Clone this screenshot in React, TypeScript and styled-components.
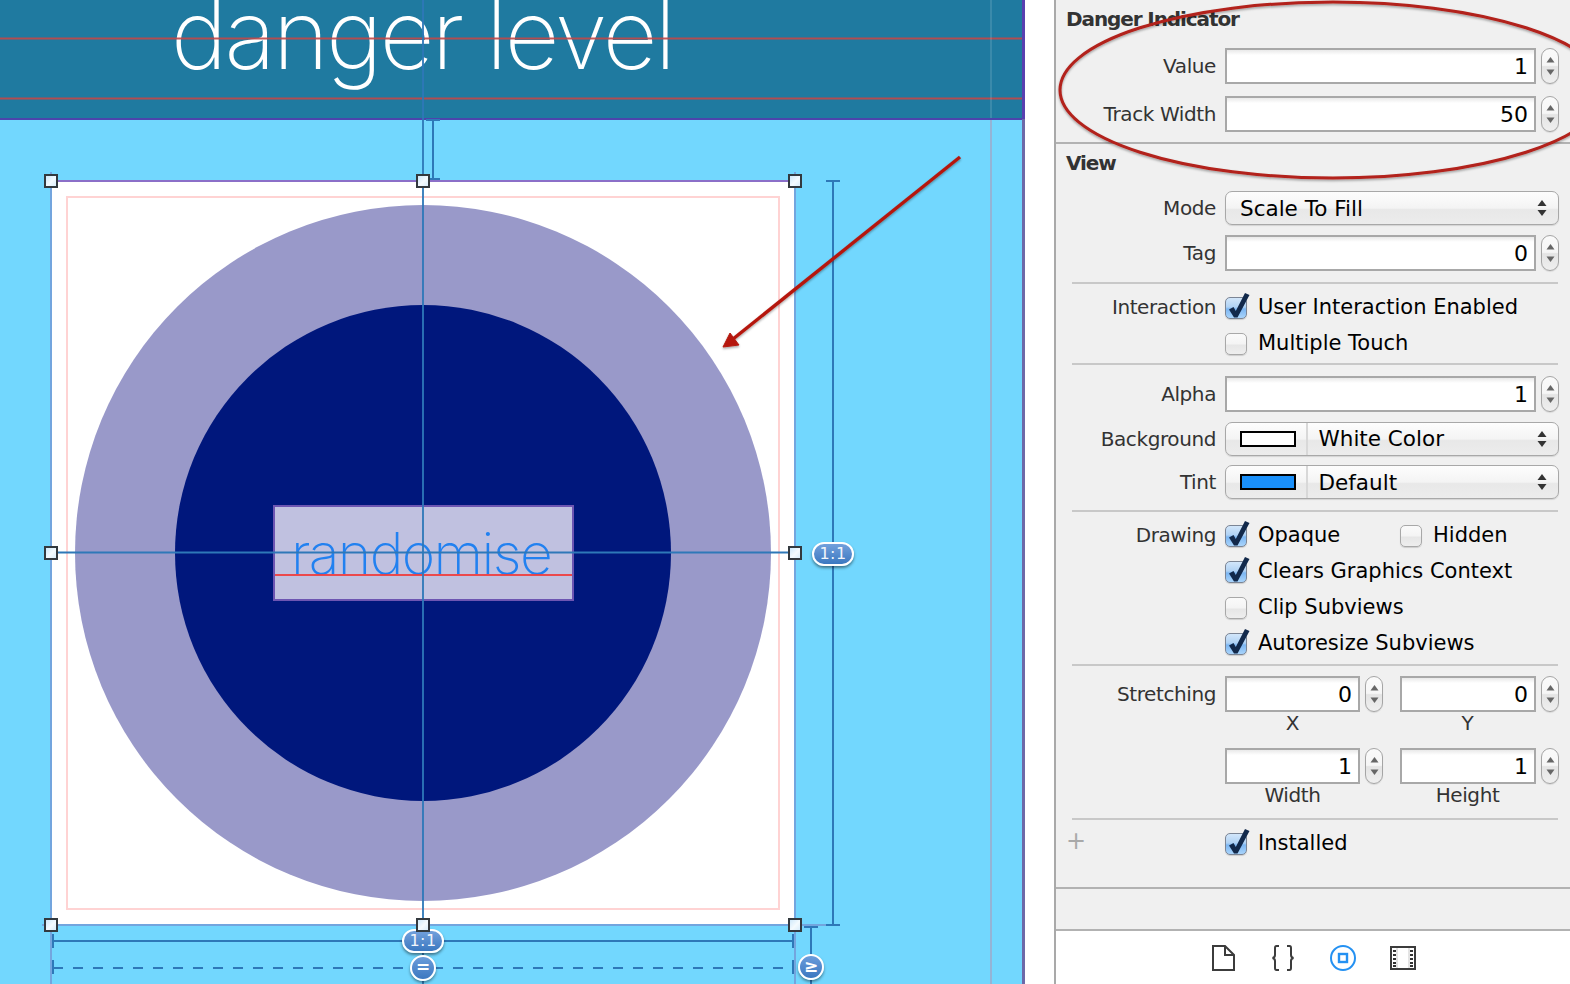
import React from "react";
import styled, { createGlobalStyle } from "styled-components";

const Global = createGlobalStyle`
  html, body { margin: 0; padding: 0; background: #fff; }
  #root { width: 1570px; height: 984px; }
`;

const Page = styled.div`
  position: relative;
  width: 1570px;
  height: 984px;
  overflow: hidden;
  display: flex;
  background: #fff;
`;

/* ---------- design canvas ---------- */

const Stage = styled.div`
  position: relative;
  flex: none;
  width: 1022px;
  height: 984px;
  background: #72d7fe;
  border-right: 3px solid;
  border-image: linear-gradient(#5940b0 120px, #6d69a8 120px) 1;
  overflow: hidden;
`;

const HeaderBand = styled.div`
  height: 118px;
  background: #1f7aa0;
  border-bottom: 2px solid #4c44ac;
  display: flex;
  justify-content: flex-start;
  padding-left: 171px;
  overflow: hidden;
`;

const Title = styled.div`
  font-family: Inter, "Liberation Sans", sans-serif;
  font-weight: 200;
  font-size: 95px;
  line-height: 96px;
  letter-spacing: -2.6px;
  color: #fff;
  margin-top: -13px;
  white-space: nowrap;
`;

const ViewBox = styled.div`
  position: absolute;
  left: 50px;
  top: 180px;
  width: 746px;
  height: 746px;
  box-sizing: border-box;
  background: #fff;
  border: 2px solid #6fa2dc;
  border-top-color: #8b6fc8;
  display: flex;
  align-items: center;
  justify-content: center;
`;

const Margin = styled.div`
  position: absolute;
  inset: 14px;
  border: 2px solid #ffd3d3;
`;

const Ring = styled.div`
  position: relative;
  flex: none;
  width: 696px;
  height: 696px;
  border-radius: 50%;
  background: #9999c9;
  display: flex;
  align-items: center;
  justify-content: center;
`;

const Core = styled.div`
  flex: none;
  width: 496px;
  height: 496px;
  border-radius: 50%;
  background: #00177c;
  display: flex;
  align-items: center;
  justify-content: center;
`;

const RandomButton = styled.div`
  position: relative;
  flex: none;
  box-sizing: border-box;
  width: 301px;
  height: 96px;
  background: #c0c1e0;
  border: 2px solid #6d55b2;
  display: flex;
  align-items: center;
  justify-content: center;
  font-family: Inter, "Liberation Sans", sans-serif;
  font-weight: 200;
  font-size: 57px;
  letter-spacing: -1.6px;
  color: #2281f0;
  padding: 1px 4px 0 0;
`;

const Baseline = styled.div`
  position: absolute;
  left: 0;
  right: 0;
  top: 67px;
  height: 2px;
  background: rgba(240, 60, 60, 0.9);
`;

const GuideLayer = styled.svg`
  position: absolute;
  left: 0;
  top: 0;
`;

const Handle = styled.div<{ $x: number; $y: number }>`
  position: absolute;
  left: ${(p) => p.$x - 7}px;
  top: ${(p) => p.$y - 7}px;
  width: 14px;
  height: 14px;
  box-sizing: border-box;
  border: 2px solid #33393e;
  background: linear-gradient(135deg, #cfe9fb 0%, #f4fafe 55%, #d9edfb 100%);
`;

const Pill = styled.div<{ $x: number; $y: number }>`
  position: absolute;
  left: ${(p) => p.$x - 21}px;
  top: ${(p) => p.$y - 12}px;
  width: 42px;
  height: 24px;
  box-sizing: border-box;
  border: 2px solid #fff;
  border-radius: 12px;
  background: linear-gradient(#72a0dc, #3b78c0);
  box-shadow: 0 2px 3px rgba(0, 0, 0, 0.45);
  color: #f2f5fb;
  font: 16px/20px "DejaVu Sans", sans-serif;
  letter-spacing: 0.4px;
  text-align: center;
`;

const RoundBadge = styled.div<{ $x: number; $y: number }>`
  position: absolute;
  left: ${(p) => p.$x - 13}px;
  top: ${(p) => p.$y - 13}px;
  width: 26px;
  height: 26px;
  box-sizing: border-box;
  border: 2px solid #fff;
  border-radius: 50%;
  background: linear-gradient(#6b9cdb, #3b78c0);
  box-shadow: 0 2px 3px rgba(0, 0, 0, 0.4);
  color: #fff;
  font: bold 17px/21px "DejaVu Sans", sans-serif;
  text-align: center;
`;

const Gutter = styled.div`
  flex: none;
  width: 29px;
`;

/* ---------- inspector ---------- */

const Inspector = styled.div`
  flex: none;
  width: 516px;
  height: 984px;
  box-sizing: border-box;
  background: #f0f0f0;
  border-left: 2px solid #a9a9a9;
  display: flex;
  flex-direction: column;
  font-family: "DejaVu Sans", sans-serif;
  font-size: 20px;
  letter-spacing: -0.4px;
`;

const Section = styled.section<{ $top: number; $height: number }>`
  flex: none;
  box-sizing: border-box;
  height: ${(p) => p.$height}px;
  padding-top: ${(p) => p.$top}px;
  border-bottom: 2px solid #b2b2b2;
`;

const Heading = styled.h2<{ $below: number }>`
  margin: 0 0 ${(p) => p.$below}px 10px;
  font-size: 20px;
  line-height: 22px;
  font-weight: 700;
  letter-spacing: -1.1px;
  color: #333;
`;

const Stack = styled.div<{ $gap: number }>`
  display: flex;
  flex-direction: column;
  gap: ${(p) => p.$gap}px;
`;

const Row = styled.div<{ $above?: number }>`
  display: grid;
  grid-template-columns: 160px 334px;
  column-gap: 9px;
  align-items: center;
  margin-top: ${(p) => p.$above ?? 0}px;
`;

const Label = styled.div`
  text-align: right;
  color: #333;
  white-space: nowrap;
`;

const Divider = styled.div<{ $before: number; $after: number }>`
  height: 2px;
  background: #c8c8c8;
  margin: ${(p) => p.$before}px 12px ${(p) => p.$after}px 16px;
`;

const NumberWrap = styled.div`
  display: flex;
  gap: 5px;
  align-items: stretch;
`;

const NumberBox = styled.div`
  flex: 1;
  box-sizing: border-box;
  height: 36px;
  padding-right: 6px;
  border: 2px solid #a8a8a8;
  background: linear-gradient(#e9e9e9 0, #fff 5px);
  text-align: right;
  line-height: 34px;
  font-size: 22px;
  letter-spacing: 0;
  color: #000;
`;

const StepperBody = styled.div`
  flex: none;
  width: 18px;
  box-sizing: border-box;
  border: 1.5px solid #a5a5a5;
  border-radius: 9px;
  background: linear-gradient(#fafafa 0%, #f6f6f6 48%, #e4e4e4 52%, #efefef 100%);
  box-shadow: 0 1px 1px rgba(0, 0, 0, 0.1);
  display: flex;
  align-items: center;
  justify-content: center;
`;

const Pair = styled.div`
  display: grid;
  grid-template-columns: 158px 159px;
  column-gap: 17px;
  align-items: center;
`;

const PairCaption = styled.div`
  width: 135px;
  height: 22px;
  line-height: 22px;
  text-align: center;
  color: #333;
`;

const SelectBox = styled.div`
  box-sizing: border-box;
  height: 34px;
  border: 1.5px solid #a8a8a8;
  border-radius: 7px;
  background: linear-gradient(#fdfdfd 0%, #f4f4f4 50%, #e8e8e8 55%, #ececec 100%);
  box-shadow: 0 1px 1px rgba(0, 0, 0, 0.12);
  display: flex;
  align-items: center;
  padding: 0 11px 0 14px;
  color: #000;
  font-size: 21.5px;
  letter-spacing: 0;
`;

const SelectText = styled.span`
  flex: 1;
`;

const Swatch = styled.span<{ $color: string }>`
  flex: none;
  box-sizing: border-box;
  width: 56px;
  height: 16px;
  border: 2px solid #000;
  background: ${(p) => p.$color};
`;

const SwatchEdge = styled.span`
  flex: none;
  width: 1.5px;
  height: 32px;
  margin: 0 11px 0 10px;
  background: #d8d8d8;
`;

const CheckRow = styled.div`
  display: flex;
  align-items: center;
  gap: 11px;
  height: 36px;
  color: #000;
  font-size: 21px;
  letter-spacing: 0;
  white-space: nowrap;
`;

const Box = styled.span<{ $on?: boolean }>`
  position: relative;
  flex: none;
  box-sizing: border-box;
  width: 22px;
  height: 22px;
  margin-top: 1px;
  border: 1.5px solid ${(p) => (p.$on ? "#7b8595" : "#a8a8a8")};
  border-radius: 5px;
  background: ${(p) =>
    p.$on
      ? "linear-gradient(#d2e6fa 0%, #b0d2f4 45%, #7cb6f2 55%, #a9d4fb 100%)"
      : "linear-gradient(#fafafa 0%, #f4f4f4 50%, #e6e6e6 55%, #eeeeee 100%)"};
  box-shadow: 0 1px 1px rgba(0, 0, 0, 0.15);
`;

const CheckSvg = styled.svg`
  position: absolute;
  left: 0;
  top: 0;
  overflow: visible;
`;

const PlusMark = styled.span`
  position: absolute;
  left: 1066px;
  top: 829px;
  font: 24px/24px "DejaVu Sans", sans-serif;
  letter-spacing: 0;
  color: #a9a9a9;
`;

const SpareBar = styled.div`
  flex: none;
  height: 42px;
  box-sizing: border-box;
  border-bottom: 2px solid #b2b2b2;
`;

const IconBar = styled.div`
  flex: 1;
  background: #fff;
  display: flex;
  align-items: center;
  justify-content: center;
  gap: 34px;
  padding-right: 1px;
`;

const IconSlot = styled.span`
  flex: none;
  width: 26px;
  height: 26px;
  display: block;
`;

const AnnotationLayer = styled.svg`
  position: absolute;
  left: 0;
  top: 0;
  pointer-events: none;
`;

/* ---------- little parts ---------- */

const Stepper = () => (
  <StepperBody>
    <svg width="11" height="24" viewBox="0 0 11 24">
      <path d="M5.5 3 L9.5 8.5 H1.5 Z" fill="#666" />
      <path d="M5.5 21 L9.5 15.5 H1.5 Z" fill="#666" />
    </svg>
  </StepperBody>
);

const NumberField = ({ value }: { value: string }) => (
  <NumberWrap>
    <NumberBox>{value}</NumberBox>
    <Stepper />
  </NumberWrap>
);

const UpDown = () => (
  <svg width="10" height="18" viewBox="0 0 10 18">
    <path d="M5 1 L9.5 7 H0.5 Z" fill="#333" />
    <path d="M5 17 L9.5 11 H0.5 Z" fill="#333" />
  </svg>
);

const Select = ({ text, swatch }: { text: string; swatch?: string }) => (
  <SelectBox>
    {swatch && (
      <>
        <Swatch $color={swatch} />
        <SwatchEdge />
      </>
    )}
    <SelectText>{text}</SelectText>
    <UpDown />
  </SelectBox>
);

const Check = ({ on, text }: { on?: boolean; text: string }) => (
  <CheckRow>
    <Box $on={on}>
      {on && (
        <CheckSvg width="22" height="22" viewBox="0 0 22 22">
          <path d="M3 11.5 L7.5 9 L9.8 13 L19 -5 L23.5 -3 L11.5 19.5 L8 19.5 Z" fill="#12294b" />
        </CheckSvg>
      )}
    </Box>
    {text}
  </CheckRow>
);

const DocIcon = () => (
  <IconSlot>
    <svg width="26" height="26" viewBox="0 0 26 26" fill="none" stroke="#3c3c3c" strokeWidth="2">
      <path d="M3 1 H15 L24 10 V25 H3 Z" fill="#fff" />
      <path d="M15 1 V10 H24" />
    </svg>
  </IconSlot>
);

const BraceIcon = () => (
  <IconSlot>
    <svg width="26" height="26" viewBox="0 0 26 26" fill="none" stroke="#3c3c3c" strokeWidth="2">
      <path d="M9 1 H6.5 Q5 1 5 3 V10 Q5 12.5 2.5 13 Q5 13.5 5 16 V23 Q5 25 6.5 25 H9" />
      <path d="M17 1 H19.5 Q21 1 21 3 V10 Q21 12.5 23.5 13 Q21 13.5 21 16 V23 Q21 25 19.5 25 H17" />
    </svg>
  </IconSlot>
);

const AttrIcon = () => (
  <IconSlot>
    <svg width="26" height="26" viewBox="0 0 26 26" fill="none" stroke="#2491f2" strokeWidth="2">
      <circle cx="13" cy="13" r="12" />
      <rect x="9" y="9" width="8" height="8" strokeWidth="2.4" />
    </svg>
  </IconSlot>
);

const FilmIcon = () => (
  <IconSlot>
    <svg width="26" height="26" viewBox="0 0 26 26" fill="none">
      <rect x="1" y="2" width="24" height="22" stroke="#3c3c3c" strokeWidth="2" fill="#fff" />
      <path d="M7 3 V23 M19 3 V23" stroke="#c8c8c8" strokeWidth="1" />
      <path d="M3 6 H6 M3 10 H6 M3 14 H6 M3 18 H6 M3 21 H6 M20 6 H23 M20 10 H23 M20 14 H23 M20 18 H23 M20 21 H23" stroke="#333" strokeWidth="2" />
    </svg>
  </IconSlot>
);

const BLUE = "#2e78b8";
const PALE = "#73a5de";

const Guides = () => (
  <GuideLayer width="1022" height="984" viewBox="0 0 1022 984" fill="none">
    <path d="M0 38.5 H1022 M0 98.5 H1022" stroke="#c04848" strokeOpacity="0.9" strokeWidth="2" />
    <path d="M991 0 V118" stroke="#fff" strokeOpacity="0.12" strokeWidth="2" />
    <path d="M991 120 V984" stroke="#94b4d6" strokeWidth="2" />
    <path d="M51 172 V984 M795 172 V984 M42 925 H826" stroke={PALE} strokeWidth="2" />
    <path d="M423 0 V984 M51 552.5 H795" stroke={BLUE} strokeWidth="1.8" />
    <path d="M426 120 H440 M433 120 V179 M430 179 H440" stroke={BLUE} strokeWidth="2" />
    <path d="M826 181 H840 M833 181 V925 M826 925 H840" stroke={BLUE} strokeWidth="2" />
    <path d="M53 934 V948 M793 934 V948 M53 941 H793" stroke={BLUE} strokeWidth="2" />
    <path d="M53 960 V974 M793 960 V974" stroke={BLUE} strokeWidth="2" />
    <path d="M53 968 H793" stroke={BLUE} strokeWidth="2" strokeDasharray="10 10" />
    <path d="M804 927 H818 M811 927 V984" stroke={BLUE} strokeWidth="2" />
  </GuideLayer>
);

const handles: [number, number][] = [
  [51, 181],
  [423, 181],
  [795, 181],
  [51, 553],
  [795, 553],
  [51, 925],
  [423, 925],
  [795, 925],
];

export default function App() {
  return (
    <Page>
      <Global />
      <Stage>
        <HeaderBand>
          <Title>danger level</Title>
        </HeaderBand>
        <ViewBox>
          <Margin />
          <Ring>
            <Core>
              <RandomButton>
                randomise
                <Baseline />
              </RandomButton>
            </Core>
          </Ring>
        </ViewBox>
        <Guides />
        <Pill $x={833} $y={554}>1:1</Pill>
        <Pill $x={423} $y={941}>1:1</Pill>
        <RoundBadge $x={423} $y={968}>=</RoundBadge>
        <RoundBadge $x={811} $y={967}>≥</RoundBadge>
        {handles.map(([x, y]) => (
          <Handle key={`${x}-${y}`} $x={x} $y={y} />
        ))}
      </Stage>
      <Gutter />
      <Inspector>
        <Section $top={8} $height={144}>
          <Heading $below={18}>Danger Indicator</Heading>
          <Stack $gap={12}>
            <Row>
              <Label>Value</Label>
              <NumberField value="1" />
            </Row>
            <Row>
              <Label>Track Width</Label>
              <NumberField value="50" />
            </Row>
          </Stack>
        </Section>
        <Section $top={8} $height={745}>
          <Heading $below={17}>View</Heading>
          <Stack $gap={10}>
            <Row>
              <Label>Mode</Label>
              <Select text="Scale To Fill" />
            </Row>
            <Row>
              <Label>Tag</Label>
              <NumberField value="0" />
            </Row>
          </Stack>
          <Divider $before={11} $after={5} />
          <Row>
            <Label>Interaction</Label>
            <Check on text="User Interaction Enabled" />
          </Row>
          <Row>
            <span />
            <Check text="Multiple Touch" />
          </Row>
          <Divider $before={2} $after={11} />
          <Stack $gap={9.5}>
            <Row>
              <Label>Alpha</Label>
              <NumberField value="1" />
            </Row>
            <Row>
              <Label>Background</Label>
              <Select text="White Color" swatch="#fff" />
            </Row>
            <Row>
              <Label>Tint</Label>
              <Select text="Default" swatch="#1a90fa" />
            </Row>
          </Stack>
          <Divider $before={11} $after={5} />
          <Row>
            <Label>Drawing</Label>
            <Pair>
              <Check on text="Opaque" />
              <Check text="Hidden" />
            </Pair>
          </Row>
          <Row>
            <span />
            <Check on text="Clears Graphics Context" />
          </Row>
          <Row>
            <span />
            <Check text="Clip Subviews" />
          </Row>
          <Row>
            <span />
            <Check on text="Autoresize Subviews" />
          </Row>
          <Divider $before={3} $after={10} />
          <Row>
            <Label>Stretching</Label>
            <Pair>
              <NumberField value="0" />
              <NumberField value="0" />
            </Pair>
          </Row>
          <Row>
            <span />
            <Pair>
              <PairCaption>X</PairCaption>
              <PairCaption>Y</PairCaption>
            </Pair>
          </Row>
          <Row $above={14}>
            <span />
            <Pair>
              <NumberField value="1" />
              <NumberField value="1" />
            </Pair>
          </Row>
          <Row>
            <span />
            <Pair>
              <PairCaption>Width</PairCaption>
              <PairCaption>Height</PairCaption>
            </Pair>
          </Row>
          <Divider $before={12} $after={5} />
          <Row>
            <span />
            <Check on text="Installed" />
          </Row>
        </Section>
        <SpareBar />
        <IconBar>
          <DocIcon />
          <BraceIcon />
          <AttrIcon />
          <FilmIcon />
        </IconBar>
      </Inspector>
      <PlusMark>+</PlusMark>
      <AnnotationLayer width="1570" height="984" viewBox="0 0 1570 984" fill="none">
        <defs>
          <filter id="soft" x="-10%" y="-10%" width="120%" height="120%">
            <feDropShadow dx="0" dy="1.5" stdDeviation="1.2" floodColor="#000" floodOpacity="0.35" />
          </filter>
        </defs>
        <g filter="url(#soft)">
          <ellipse cx="1333" cy="90" rx="273" ry="88" stroke="#b2201a" strokeWidth="3" />
          <path d="M960 157 L733 339" stroke="#b5190f" strokeWidth="3.4" />
          <path d="M723 347 L730 333 L739 345 Z" fill="#b5190f" stroke="#b5190f" />
        </g>
      </AnnotationLayer>
    </Page>
  );
}
